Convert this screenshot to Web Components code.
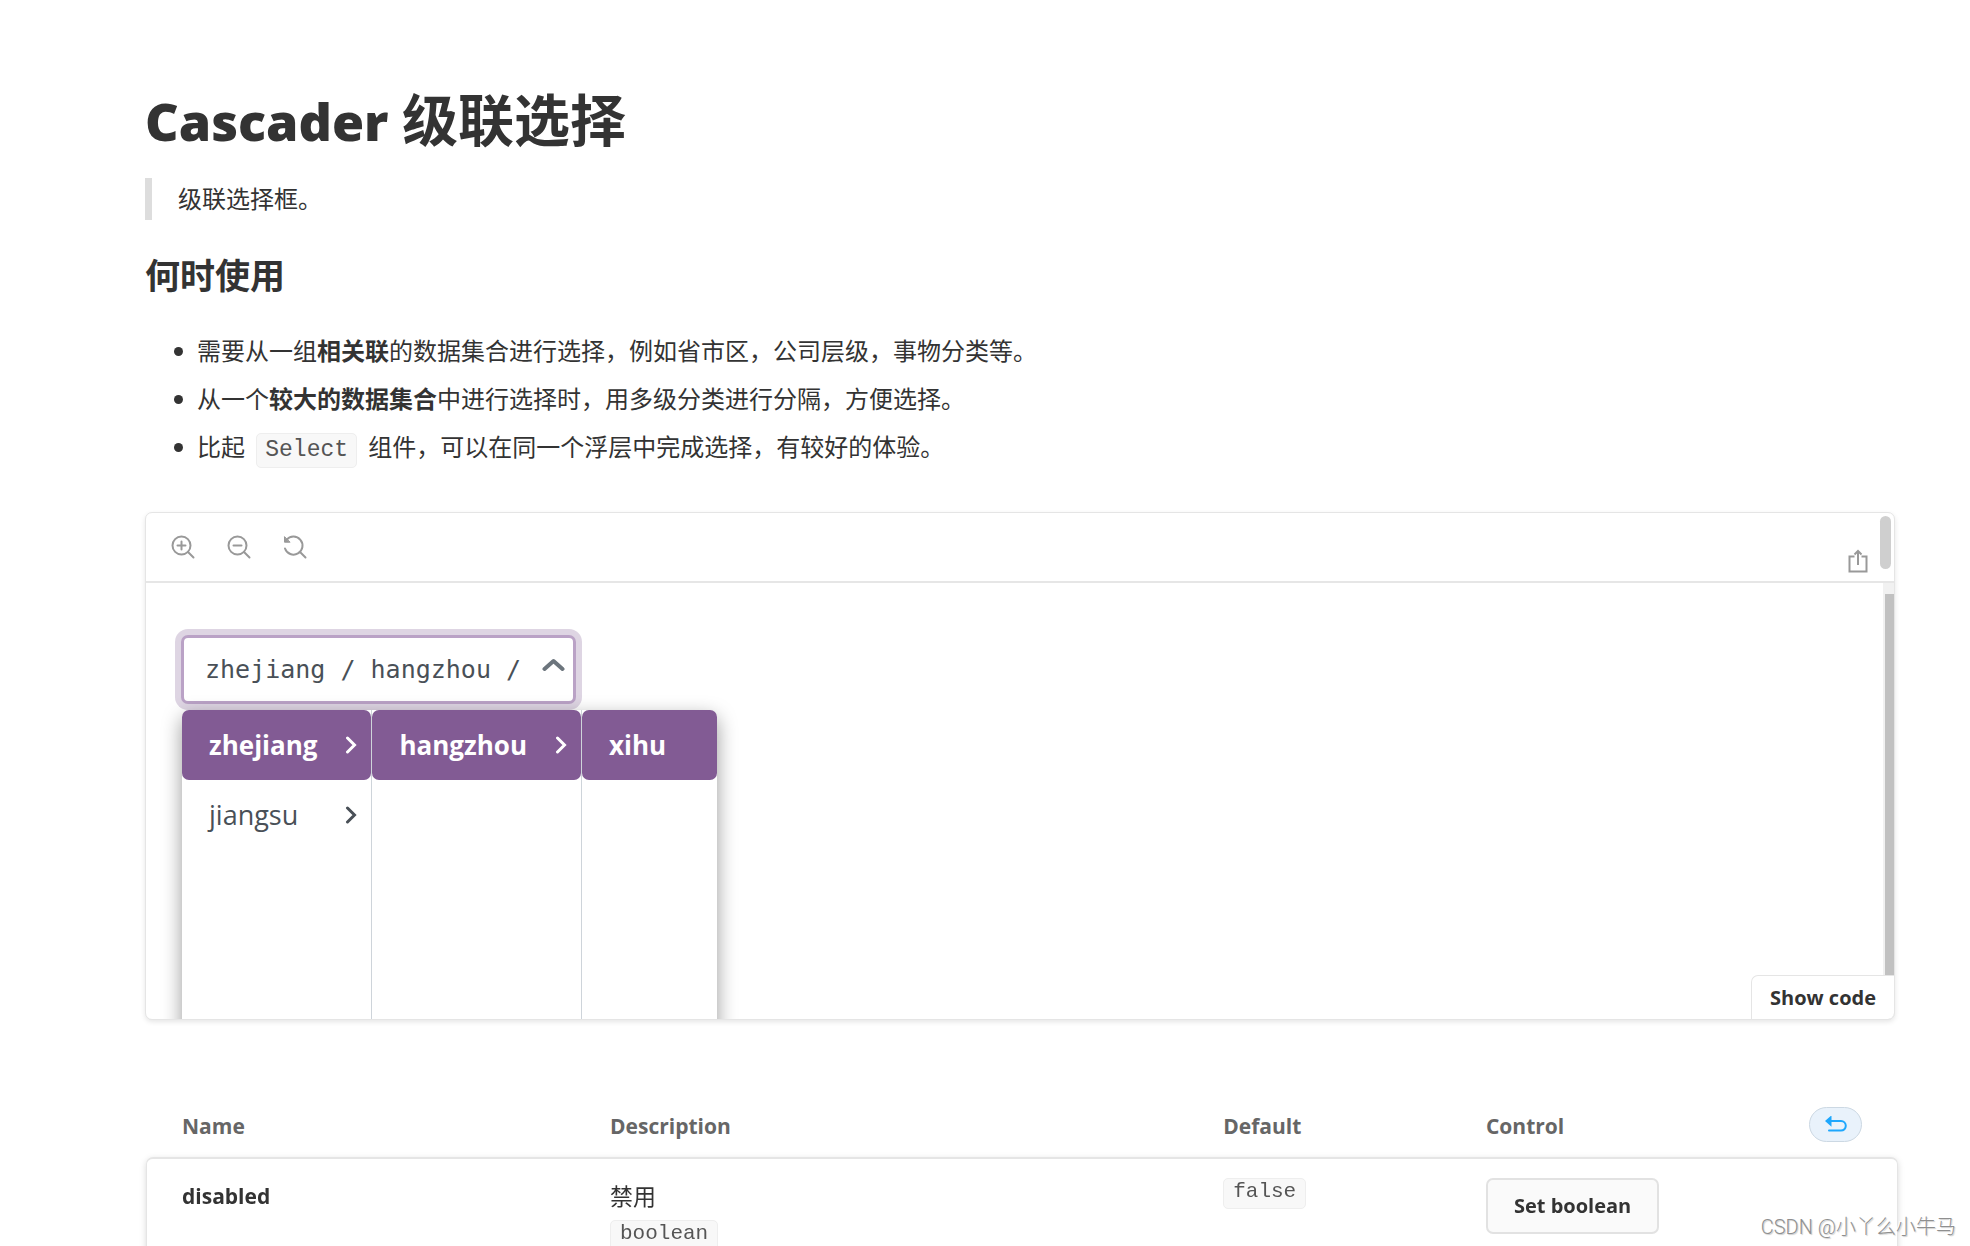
<!DOCTYPE html>
<html lang="zh-CN">
<head>
<meta charset="utf-8">
<meta name="viewport" content="width=device-width, initial-scale=1">
<title>Cascader 级联选择</title>
<style>
  html, body { margin: 0; height: 100%; }
  body {
    overflow: hidden;
    background: #fff;
    color: #333;
    font-family: "Open Sans", "Noto Sans CJK SC", sans-serif;
    font-size: 24px;
  }
</style>
</head>
<body>
<docs-page>
  <docs-title>Cascader <span>级联选择</span></docs-title>
  <docs-quote>级联选择框。</docs-quote>
  <docs-heading>何时使用</docs-heading>
  <docs-list>
    <docs-item>需要从一组<b>相关联</b>的数据集合进行选择，例如省市区，公司层级，事物分类等。</docs-item>
    <docs-item>从一个<b>较大的数据集合</b>中进行选择时，用多级分类进行分隔，方便选择。</docs-item>
    <docs-item>比起 <code-chip large>Select</code-chip> 组件，可以在同一个浮层中完成选择，有较好的体验。</docs-item>
  </docs-list>
  <story-preview>
    <cascader-field value="zhejiang / hangzhou /">
      <cascader-column>
        <cascader-option selected branch>zhejiang</cascader-option>
        <cascader-option branch>jiangsu</cascader-option>
      </cascader-column>
      <cascader-column>
        <cascader-option selected branch>hangzhou</cascader-option>
      </cascader-column>
      <cascader-column>
        <cascader-option selected>xihu</cascader-option>
      </cascader-column>
    </cascader-field>
  </story-preview>
  <props-table></props-table>
</docs-page>
<page-watermark>CSDN @小丫么小牛马</page-watermark>

<script>
  function define(name, html, setup) {
    const template = document.createElement('template');
    template.innerHTML = html;
    customElements.define(name, class extends HTMLElement {
      constructor() {
        super();
        this.attachShadow({ mode: 'open' }).append(template.content.cloneNode(true));
      }
      connectedCallback() { if (setup) setup(this, this.shadowRoot); }
    });
  }

  define('docs-page', `
    <style>
      :host { display: block; padding: 79px 75px 0 145px; }
      main { display: flex; flex-direction: column; }
    </style>
    <main><slot></slot></main>`);

  define('docs-title', `
    <style>
      :host { display: block; }
      h1 { margin: 0; font-size: 52px; line-height: 80px; font-weight: 800; }
      ::slotted(span) { font-size: 56px; font-weight: 700; }
    </style>
    <h1><slot></slot></h1>`);

  define('docs-quote', `
    <style>
      :host { display: block; margin-top: 17px; }
      blockquote { margin: 0; padding-left: 26px; border-left: 7px solid #ddd; line-height: 42px; }
    </style>
    <blockquote><slot></slot></blockquote>`);

  define('docs-heading', `
    <style>
      :host { display: block; margin-top: 32px; }
      h2 { margin: 0; font-size: 35px; line-height: 48px; font-weight: 700; }
    </style>
    <h2><slot></slot></h2>`);

  define('docs-list', `
    <style>
      :host { display: flex; flex-direction: column; margin-top: 27px; }
    </style>
    <slot></slot>`, host => host.setAttribute('role', 'list'));

  define('docs-item', `
    <style>
      :host { display: flex; align-items: center; gap: 14px; padding-left: 29px; line-height: 48px; }
      i { width: 9px; height: 9px; border-radius: 50%; background: #333; }
    </style>
    <i></i><span><slot></slot></span>`, host => host.setAttribute('role', 'listitem'));

  define('code-chip', `
    <style>
      :host { display: inline-block; vertical-align: top; }
      code {
        display: block; box-sizing: border-box; height: 31px; padding: 0 9px;
        border: 1px solid #eee; border-radius: 5px; background: #f8f8f8; color: #555;
        font: 21px/26px "Liberation Mono", monospace; white-space: nowrap;
      }
      :host([large]) { margin: 10px 5px 0; }
      :host([large]) code { height: 35px; padding: 0 8px; font-size: 23px; line-height: 32px; }
    </style>
    <code><slot></slot></code>`);

  define('tool-button', `
    <style>
      :host { display: block; }
      button { display: block; padding: 0; border: 0; background: none; color: #999; cursor: pointer; }
      ::slotted(svg) { display: block; }
    </style>
    <button type="button"><slot></slot></button>`, (host, root) => {
      root.querySelector('button').setAttribute('aria-label', host.getAttribute('label'));
    });

  define('story-preview', `
    <style>
      :host {
        display: flex; flex-direction: column; position: relative; overflow: hidden;
        margin-top: 41px; border: 1px solid #e5e5e5; border-radius: 7px;
        background: #fff; box-shadow: 0 2px 5px rgba(0,0,0,.1);
      }
      .bar {
        display: flex; align-items: center; justify-content: space-between; height: 68px; padding: 0 3px 0 25px;
        border-bottom: 2px solid #e6e6e6;
      }
      .zoom { display: flex; gap: 32px; }
      .end { display: flex; gap: 12px; height: 100%; }
      .end tool-button { align-self: flex-end; margin-bottom: 8px; }
      .thumb { width: 11px; height: 53px; margin-top: 3px; border-radius: 6px; background: #cfcfcf; }
      .stage { display: flex; height: 436px; }
      .view { flex: 1; min-width: 0; overflow: hidden; padding: 52px 0 0 35px; box-sizing: border-box; }
      .track { display: flex; width: 9px; padding: 11px 0 0 2px; background: #f1f1f1; }
      .track i { flex: 1; background: #c1c1c1; }
      .show {
        position: absolute; right: 0; bottom: 0; height: 44px; padding: 0 18px;
        border: 1px solid #e5e5e5; border-width: 1px 0 0 1px; border-radius: 7px 0 0 0;
        background: #fff; color: #333; font: 700 20px/43px "Open Sans", sans-serif;
      }
    </style>
    <div class="bar">
      <div class="zoom">
      <tool-button label="Zoom in"><svg width="24" height="24" viewBox="0 0 24 24" fill="none" stroke="currentColor" stroke-width="2" stroke-linecap="round"><circle cx="10.500" cy="10.500" r="9"/><path d="M17 17l5.500 5.500M6.500 10.500h8M10.500 6.500v8"/></svg></tool-button>
      <tool-button label="Zoom out"><svg width="24" height="24" viewBox="0 0 24 24" fill="none" stroke="currentColor" stroke-width="2" stroke-linecap="round"><circle cx="10.500" cy="10.500" r="9"/><path d="M17 17l5.500 5.500M6.500 10.500h8"/></svg></tool-button>
      <tool-button label="Reset zoom"><svg width="24" height="24" viewBox="0 0 24 24" fill="none" stroke="currentColor" stroke-width="2" stroke-linecap="round"><path d="M17 17l5.500 5.500M3.500 5A9 9 0 1 1 2 13.500"/><path d="M1.500 2v5.200h5.200z" fill="currentColor" stroke-width="1"/></svg></tool-button>
      </div>
      <div class="end">
        <tool-button label="Share"><svg width="20" height="24" viewBox="0 0 20 24" fill="none" stroke="currentColor" stroke-width="2"><path d="M6.500 7.500H1.500v15h17v-15h-5M10 16V2.500M6.500 5.500L10 2l3.500 3.500"/></svg></tool-button>
        <i class="thumb"></i>
      </div>
    </div>
    <div class="stage">
      <div class="view"><slot></slot></div>
      <div class="track"><i></i></div>
    </div>
    <button class="show" type="button">Show code</button>`);

  define('cascader-field', `
    <style>
      :host { display: block; width: max-content; }
      label {
        display: flex; align-items: center; box-sizing: border-box; width: 395px; height: 69px; padding: 0 8px 0 21px;
        border: 3px solid #baa2c6; border-radius: 7px; background: #fff;
        box-shadow: 0 0 0 6px #ded5e3;
      }
      input {
        flex: 1; min-width: 0; padding: 0; border: 0; outline: 0; background: none; color: #495057;
        font: 25px/32px "DejaVu Sans Mono", monospace;
      }
      svg { margin-bottom: 9px; }
      .menu {
        display: flex; width: max-content; height: 360px; margin: 6px 0 0 1px; border-radius: 7px;
        position: relative; background: #fff; box-shadow: 0 7px 20px rgba(0,0,0,.4);
      }
    </style>
    <label>
      <input type="text" readonly aria-label="Cascader">
      <svg width="23" height="14" viewBox="0 0 23 14" fill="none" stroke="#6c757d" stroke-width="4" stroke-linecap="round" stroke-linejoin="round"><path d="M2.500 11L11.500 3l9 8"/></svg>
    </label>
    <div class="menu"><slot></slot></div>`, (host, root) => {
      root.querySelector('input').value = host.getAttribute('value');
    });

  define('cascader-column', `
    <style>
      :host { display: flex; flex-direction: column; }
      :host(:not(:last-child)) { border-right: 1px solid #ced4da; }
    </style>
    <slot></slot>`);

  define('cascader-option', `
    <style>
      :host { display: block; }
      button {
        display: flex; align-items: center; justify-content: space-between; gap: 28px;
        width: 100%; min-width: 135px; height: 70px; padding: 0 14px 0 27px; border: 0; border-radius: 7px;
        background: none; color: #495057; font: 27px/38px "Open Sans", sans-serif;
      }
      :host([selected]) button { background: #825b94; color: #fff; font-weight: 700; font-size: 26px; }
      svg { display: none; }
      :host([branch]) svg { display: block; }
    </style>
    <button type="button"><slot></slot><svg width="12" height="18" viewBox="0 0 12 18" fill="none" stroke="currentColor" stroke-width="3" stroke-linecap="round"><path d="M2.500 2l7 7l-7 7"/></svg></button>`);

  define('props-table', `
    <style>
      :host { display: block; margin: 75px -3px 0 1px; }
      table { width: 100%; table-layout: fixed; border-collapse: separate; border-spacing: 0; text-align: left; font-size: 23px; line-height: 36px; }
      th, td { padding: 0 0 0 26px; vertical-align: top; }
      th:first-child, td:first-child { padding-left: 36px; }
      thead th { height: 62px; color: #666; font-size: 21px; font-weight: 700; line-height: 62px; }
      thead th:last-child div { display: flex; align-items: center; justify-content: space-between; padding-right: 36px; }
      tbody { filter: drop-shadow(0 2px 3px rgba(0,0,0,.15)); }
      tbody th, tbody td { height: 110px; padding-top: 19px; border-top: 2px solid #e5e5e5; background: #fff; }
      tbody th { border-left: 1px solid #e5e5e5; border-radius: 7px 0 0 0; font-size: 21px; }
      tbody th:first-child { padding-left: 35px; }
      tbody td:last-child { border-right: 1px solid #e5e5e5; border-radius: 0 7px 0 0; }
      p { margin: 0 0 6px; }
      .reset { display: flex; align-items: center; justify-content: center; width: 53px; height: 35px; margin-bottom: 4px; padding: 0; border: 1px solid #ccd8e3; border-radius: 18px; background: #e9f2fb; color: #1ea7fd; }
      .set { height: 56px; padding: 0 26px; border: 2px solid #e2e2e2; border-radius: 7px; background: #fafafa; color: #333; font: 700 20px/52px "Open Sans", sans-serif; }
    </style>
    <table>
      <colgroup><col style="width:25%"><col style="width:35%"><col style="width:15%"><col style="width:25%"></colgroup>
      <thead><tr>
        <th scope="col">Name</th><th scope="col">Description</th><th scope="col">Default</th>
        <th scope="col"><div>Control
          <button class="reset" type="button" aria-label="Reset controls"><svg width="22" height="16" viewBox="0 0 22 16" fill="none" stroke="currentColor" stroke-width="2" stroke-linecap="round"><path d="M3 5h13a4.800 4.800 0 0 1 0 9.600H4"/><path d="M5.500 1.500L1.500 5l4 3.500z" fill="currentColor"/></svg></button>
        </div></th>
      </tr></thead>
      <tbody><tr>
        <th scope="row">disabled</th>
        <td><p>禁用</p><code-chip>boolean</code-chip></td>
        <td><code-chip>false</code-chip></td>
        <td><button class="set" type="button">Set boolean</button></td>
      </tr></tbody>
    </table>`);

  define('page-watermark', `
    <style>
      :host {
        position: absolute; right: 14px; bottom: 4px; color: #8f8f8f; font: 300 20px/30px Roboto, "Noto Sans CJK SC", sans-serif;
        text-shadow: -1px -1px 0 #fff, 1px 1px 1px #ccc;
      }
    </style>
    <slot></slot>`);
</script>
</body>
</html>
